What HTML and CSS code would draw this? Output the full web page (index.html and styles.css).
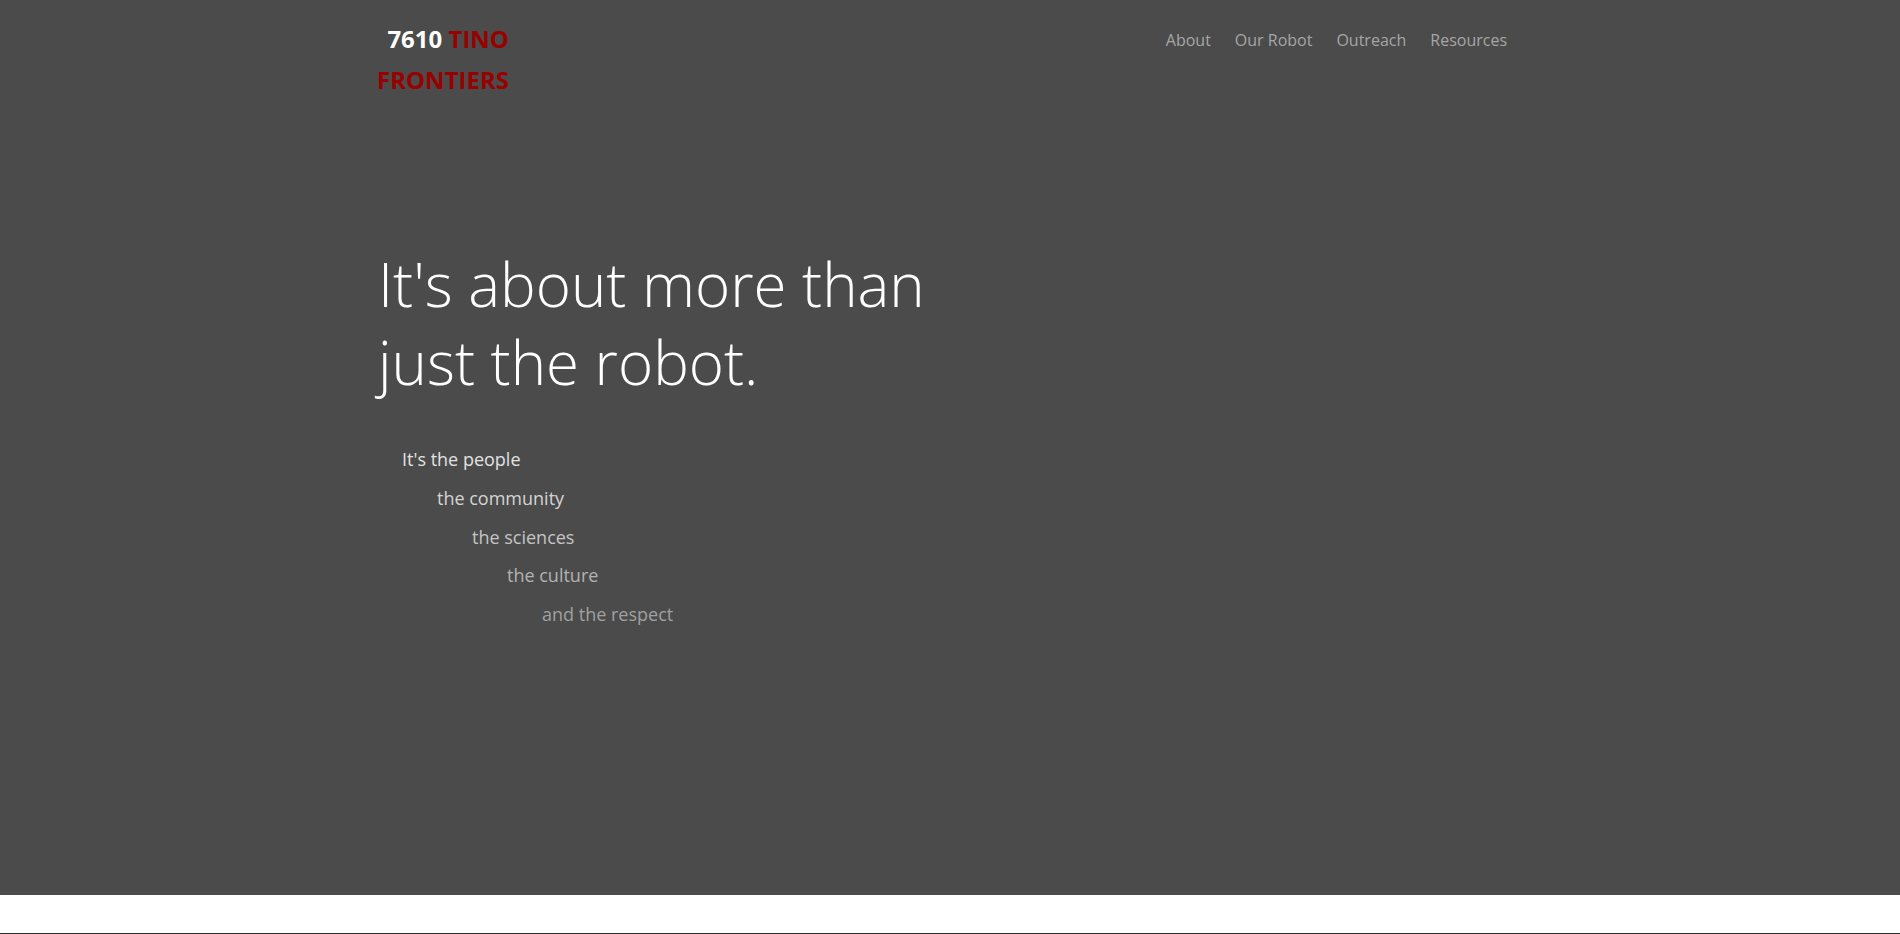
FILE: index.html
```html
<!DOCTYPE html>
<html lang="en">
<head>
<meta charset="utf-8">
<title>7610 Tino Frontiers</title>
<link rel="stylesheet" href="styles.css">
</head>
<body>
<section class="hero">
  <div class="container">
    <header class="topbar">
      <a class="brand" href="#"><span class="brand-num">7610</span> <span class="brand-red">TINO</span><br><span class="brand-red">FRONTIERS</span></a>
      <nav class="nav">
        <a href="#">About</a>
        <a href="#">Our Robot</a>
        <a href="#">Outreach</a>
        <a href="#">Resources</a>
      </nav>
    </header>
    <h1 class="headline">It's about more than<br>just the robot.</h1>
    <ul class="values">
      <li class="v1">It's the people</li>
      <li class="v2">the community</li>
      <li class="v3">the sciences</li>
      <li class="v4">the culture</li>
      <li class="v5">and the respect</li>
    </ul>
  </div>
</section>
<section class="spacer"></section>
<section class="next"></section>
</body>
</html>
```
FILE: styles.css
```css
html, body {
  margin: 0;
  padding: 0;
}
body {
  font-family: "Open Sans", "Liberation Sans", sans-serif;
  background: #ffffff;
  overflow: hidden;
}
.hero {
  background: #4b4b4b;
  height: 895px;
}
.container {
  width: 1140px;
  margin: 0 auto;
}
.topbar {
  display: flex;
  justify-content: space-between;
  align-items: flex-start;
  height: 100px;
}
.brand {
  display: inline-block;
  text-align: right;
  text-decoration: none;
  font-weight: 700;
  font-size: 24px;
  line-height: 40.5px;
  padding-top: 19px;
  margin-left: -3px;
}
.brand-num {
  color: #ffffff;
}
.brand-red {
  color: #990000;
}
.nav {
  display: flex;
  gap: 24px;
  padding-top: 30px;
  padding-right: 13px;
}
.nav a {
  color: #a6a6a6;
  text-decoration: none;
  font-size: 16px;
  line-height: 20px;
}
.headline {
  margin: 145px 0 0 -2px;
  font-weight: 300;
  font-size: 60px;
  line-height: 78px;
  color: #ffffff;
}
.values {
  list-style: none;
  margin: 39px 0 0;
  padding: 0;
  font-size: 18px;
  line-height: 38.8px;
}
.v1 { padding-left: 22px; color: #e2e2e2; }
.v2 { padding-left: 57px; color: #d4d4d4; }
.v3 { padding-left: 92px; color: #c4c4c4; }
.v4 { padding-left: 127px; color: #b2b2b2; }
.v5 { padding-left: 162px; color: #a0a0a0; }
.spacer {
  height: 38px;
  background: #ffffff;
}
.next {
  height: 200px;
  background: #2a2a2a;
}
```
